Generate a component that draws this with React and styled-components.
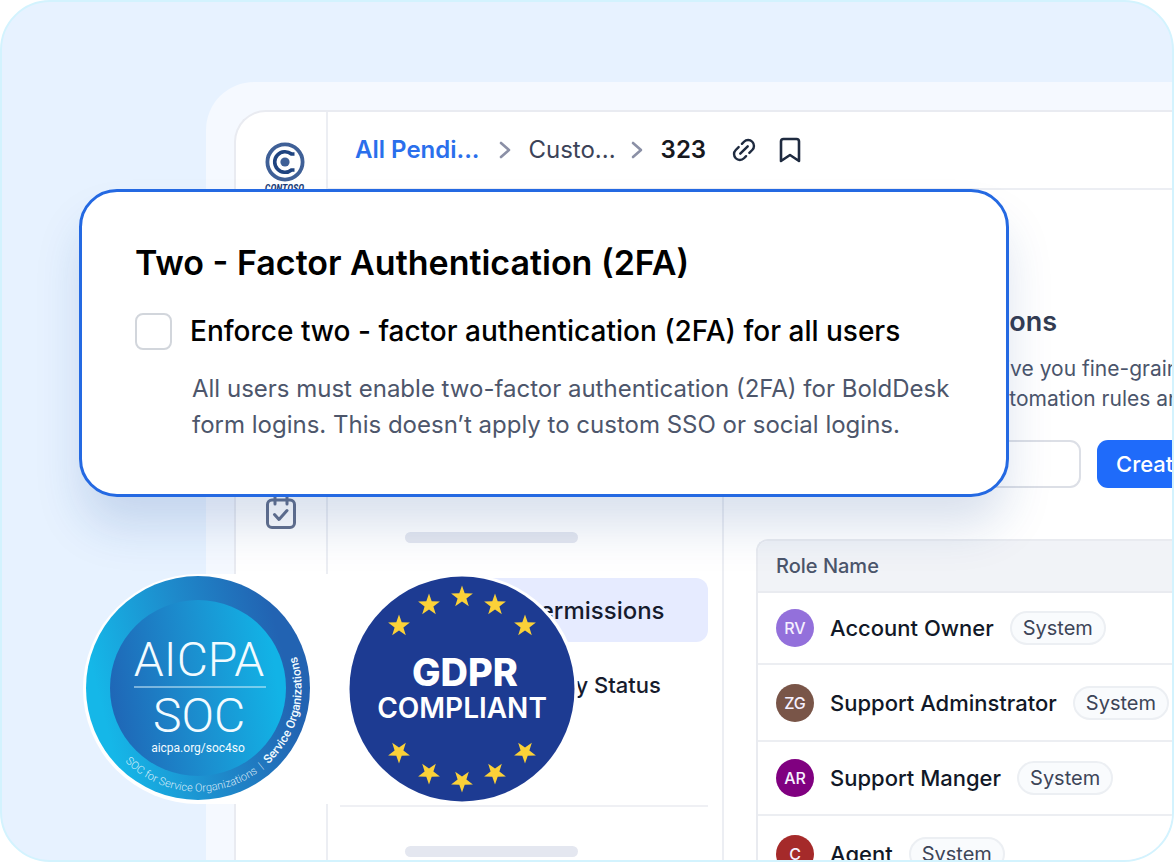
import styled, { createGlobalStyle } from "styled-components";

const GlobalStyle = createGlobalStyle`
  * {
    box-sizing: border-box;
  }
  body {
    margin: 0;
    background: #fff;
    font-family: Inter, "Liberation Sans", sans-serif;
    color: #111827;
  }
  h1, h2, p {
    margin: 0;
  }
`;

const Stage = styled.div`
  position: relative;
  display: flex;
  height: 100vh;
  padding: 80px 0 0 204px;
  overflow: hidden;
  border: 2px solid #d3f3fe;
  border-radius: 50px;
  background: #e7f2ff;
`;

const Frame = styled.div`
  display: flex;
  flex: 1;
  min-width: 0;
  padding: 28px 0 0 28px;
  border-top-left-radius: 48px;
  background: #f5f9ff;
`;

const AppWindow = styled.div`
  display: flex;
  flex: 1;
  min-width: 0;
  overflow: hidden;
  border: solid #e9ebf1;
  border-width: 2px 0 0 2px;
  border-top-left-radius: 32px;
  background: #fff;
`;

const Rail = styled.aside`
  display: flex;
  flex: none;
  flex-direction: column;
  align-items: center;
  gap: 300px;
  width: 92px;
  padding-top: 30px;
  border-right: 2px solid #eceef3;
`;

const Brand = styled.div`
  display: flex;
  flex-direction: column;
  align-items: center;
  height: 52px;
  padding-left: 7px;
  font: italic 700 10px/14px "Liberation Sans Narrow", "Roboto Condensed", Roboto, sans-serif;
  color: #1f3f7a;

  svg {
    flex: none;
  }
`;

const IconButton = styled.button`
  display: flex;
  padding: 0;
  border: 0;
  background: none;
  color: ${(props) => props.color};
`;

const Content = styled.div`
  display: flex;
  flex: 1;
  flex-direction: column;
  min-width: 0;
`;

const TopBar = styled.header`
  display: flex;
  flex: none;
  align-items: center;
  height: 78px;
  padding-left: 27px;
  border-bottom: 2px solid #eceef3;
  color: #8b90a6;
`;

const Crumb = styled.a`
  font-size: 24px;
  line-height: 32px;
  font-weight: ${(props) => props.weight};
  color: ${(props) => props.color};
  text-decoration: none;
  white-space: nowrap;
`;

const CrumbChevron = styled.svg`
  flex: none;
  margin: 0 ${(props) => props.$after}px 0 ${(props) => props.$before}px;
`;

const TopActions = styled.div`
  display: flex;
  align-items: center;
  gap: 21px;
  margin-left: 24px;
`;

const Body = styled.div`
  display: flex;
  flex: 1;
  min-height: 0;
`;

const SideNav = styled.nav`
  flex: none;
  width: 396px;
  padding: 342px 14px 0 12px;
  border-right: 2px solid #eceef3;
`;

const Skeleton = styled.div`
  width: 173px;
  height: 11px;
  margin-left: 65px;
  border-radius: 6px;
  background: #e4e7f0;
`;

const NavItem = styled.a`
  display: flex;
  align-items: center;
  height: 64px;
  margin-top: ${(props) => (props.$active ? 35 : 11)}px;
  padding-left: 66px;
  border-radius: 12px;
  background: ${(props) => (props.$active ? "#e6ebff" : "none")};
  font-size: ${(props) => (props.$active ? 24 : 22)}px;
  font-weight: 500;
  color: #161b2d;
  text-decoration: none;
  white-space: nowrap;
`;

const Divider = styled.hr`
  height: 2px;
  margin: 88px 0 39px;
  border: 0;
  background: #eff0f4;
`;

const Main = styled.main`
  flex: 1;
  min-width: 0;
  padding: 114px 0 0 32px;
  overflow: hidden;
`;

const PageTitle = styled.h1`
  padding-left: 7px;
  font-size: 27px;
  line-height: 36px;
  font-weight: 600;
  color: #333c52;
  white-space: nowrap;
`;

const PageText = styled.p`
  margin-top: 14px;
  padding-left: 7px;
  font-size: 21px;
  line-height: 30px;
  color: #4b556b;
  white-space: nowrap;
`;

const Toolbar = styled.div`
  display: flex;
  gap: 16px;
  margin-top: 26px;
`;

const SearchInput = styled.input`
  flex: none;
  width: 325px;
  height: 48px;
  padding: 0 16px;
  border: 2px solid #dcdfe6;
  border-radius: 11px;
  background: transparent;
  font: 20px Inter, sans-serif;
`;

const CreateButton = styled.button`
  flex: none;
  height: 48px;
  padding: 0 19px;
  border: 0;
  border-radius: 11px;
  background: #1f6bfa;
  font: 500 22px Inter, sans-serif;
  color: #fff;
`;

const TableBox = styled.div`
  margin-top: 51px;
  overflow: hidden;
  border: solid #e9ebf0;
  border-width: 2px 0 0 2px;
  border-top-left-radius: 12px;
`;

const RoleTable = styled.table`
  width: 100%;
  border-collapse: collapse;

  th {
    height: 51px;
    padding: 0 18px;
    border-bottom: 2px solid #e9ebf0;
    background: #f1f3f7;
    font-size: 20px;
    font-weight: 500;
    text-align: left;
    color: #4b556b;
  }
  td {
    padding: 0 18px;
    border-bottom: 2px solid #eceef2;
  }
`;

const RoleRow = styled.tr`
  height: ${(props) => props.$height}px;
`;

const RoleCell = styled.div`
  display: flex;
  align-items: center;
  font-size: 22px;
  font-weight: 500;
  white-space: nowrap;
`;

const Avatar = styled.span`
  display: flex;
  flex: none;
  align-items: center;
  justify-content: center;
  width: 38px;
  height: 38px;
  margin-right: 16px;
  border-radius: 50%;
  background: ${(props) => props.color};
  font-size: 16px;
  font-weight: 500;
  color: #f6f0ff;
`;

const Tag = styled.span`
  margin-left: 16px;
  padding: 0 11px;
  border: 2px solid #eceff3;
  border-radius: 18px;
  background: #f9fbfd;
  font-size: 20px;
  line-height: 30px;
  font-weight: 400;
  color: #3d4558;
`;

const AuthCard = styled.section`
  position: absolute;
  top: 187px;
  left: 77px;
  right: 163px;
  padding: 47px 53px 51px;
  border: 3px solid #2469e2;
  border-radius: 38px;
  background: #fff;
  box-shadow: 0 32px 48px -4px rgba(25, 70, 150, 0.17);
`;

const CardTitle = styled.h2`
  font-size: 34px;
  line-height: 48px;
  font-weight: 600;
  color: #000;
`;

const CheckLabel = styled.label`
  display: flex;
  align-items: center;
  gap: 18px;
  margin-top: 24px;
  font-size: 28px;
  line-height: 40px;
  font-weight: 500;
  color: #000;
`;

const Checkbox = styled.input`
  flex: none;
  width: 37px;
  height: 37px;
  margin: 0;
  appearance: none;
  border: 2px solid #d2d6dc;
  border-radius: 8px;
  background: #fff;
`;

const CardText = styled.p`
  margin-top: 20px;
  padding-left: 57px;
  font-size: 24px;
  line-height: 36px;
  color: #4d566b;
  white-space: nowrap;
`;

const Badges = styled.div`
  position: absolute;
  top: 572px;
  left: 81px;
  display: flex;
  gap: 39px;
  padding: 2px 3px;
  border-radius: 115px;
  background: #fff;
`;

const roles = [
  { initials: "RV", name: "Account Owner", color: "#9370db", height: 72 },
  { initials: "ZG", name: "Support Adminstrator", color: "#795548", height: 77 },
  { initials: "AR", name: "Support Manger", color: "#800080", height: 74 },
  { initials: "C", name: "Agent", color: "#a52a2a", height: 78 },
];

const stars = [
  [0, -92],
  [33, -84],
  [63, -63],
];

function Chevron({ before, after }) {
  return (
    <CrumbChevron $before={before} $after={after} width="12" height="18" viewBox="0 0 12 18" fill="none">
      <path d="M2 2l8 7-8 7" stroke="currentColor" strokeWidth="2.6" strokeLinecap="round" strokeLinejoin="round" />
    </CrumbChevron>
  );
}

function ContosoLogo() {
  return (
    <svg width="40" height="40" viewBox="0 0 40 40" fill="none">
      <circle cx="20" cy="20" r="17.6" stroke="#3f6097" strokeWidth="3.8" />
      <path d="M29.500 12H26.500A10.300 10.300 0 1 0 26.500 28H29.500" stroke="#1f4480" strokeWidth="3.6" />
      <circle cx="20" cy="20" r="4.6" fill="#3f6097" />
    </svg>
  );
}

function CalendarIcon() {
  return (
    <svg width="32" height="36" viewBox="0 0 32 36" fill="none" stroke="currentColor" strokeWidth="3" strokeLinecap="round" strokeLinejoin="round">
      <rect x="2.5" y="6" width="27" height="27.5" rx="4.5" />
      <path d="M10 2v8M22 2v8M9.5 20.5l4.5 5 8-9" />
    </svg>
  );
}

function LinkIcon() {
  return (
    <svg width="28" height="28" viewBox="0 0 24 24" fill="none" stroke="currentColor" strokeWidth="2.1" strokeLinecap="round">
      <g transform="rotate(-45 12 12)">
        <path d="M9.5 17H7A5 5 0 0 1 7 7h3.500M14.500 7H17a5 5 0 0 1 0 10h-3.500M7.500 12h9" />
      </g>
    </svg>
  );
}

function BookmarkIcon() {
  return (
    <svg width="22" height="26" viewBox="0 0 22 26" fill="none" stroke="currentColor" strokeWidth="2.6" strokeLinejoin="round">
      <path d="M2 24V4.500A2.500 2.500 0 0 1 4.500 2h13A2.500 2.500 0 0 1 20 4.500V24l-9-6z" />
    </svg>
  );
}

function SocBadge() {
  return (
    <svg width="224" height="224" viewBox="-112 -112 224 224" role="img" aria-label="AICPA SOC" fontFamily="Roboto, sans-serif" fill="#f2fbff">
      <defs>
        <linearGradient id="socOuter" x1="0" y1="0.65" x2="1" y2="0.4">
          <stop offset="0.08" stopColor="#15b7e8" />
          <stop offset="0.5" stopColor="#1e8acb" />
          <stop offset="0.9" stopColor="#2263b2" />
        </linearGradient>
        <linearGradient id="socInner" x1="0" y1="0.6" x2="1" y2="0.45">
          <stop offset="0" stopColor="#1f66b6" />
          <stop offset="0.5" stopColor="#1b8fcf" />
          <stop offset="0.95" stopColor="#12b3e6" />
        </linearGradient>
        <path id="socArc" d="M-73 73.500A103.600 103.600 0 0 0 92 -47.600" />
      </defs>
      <circle r="112" fill="url(#socOuter)" />
      <circle r="88" fill="url(#socInner)" />
      <g textAnchor="middle">
        <text x="1" y="-12" fontSize="48" fontWeight="300">AICPA</text>
        <path d="M-64 -1h132" stroke="#d9f2fb" strokeWidth="1" />
        <text x="1" y="44" fontSize="48" fontWeight="300">SOC</text>
        <text x="0" y="64" fontSize="12">aicpa.org/soc4so</text>
      </g>
      <text fontSize="11" fontWeight="300">
        <textPath href="#socArc">
          <tspan fillOpacity="0.85">SOC for Service Organizations &nbsp;| &nbsp;</tspan>
          <tspan fontSize="12" fontWeight="500">Service Organizations</tspan>
        </textPath>
      </text>
    </svg>
  );
}

function GdprBadge() {
  const star = "M0 -11.500L2.700 -3.700L10.900 -3.500L4.400 1.400L6.800 9.300L0 4.600L-6.800 9.300L-4.400 1.400L-10.900 -3.500L-2.700 -3.700Z";
  const points = [...stars, ...stars.slice(1).map(([x, y]) => [-x, y])];
  return (
    <svg width="226" height="226" viewBox="-113 -113 226 226" role="img" aria-label="GDPR compliant" fontFamily="Inter, sans-serif">
      <circle r="112.5" fill="#1d3b92" />
      {points.map(([x, y]) => (
        <g key={x} fill="#fbd138">
          <path d={star} transform={`translate(${x} ${y})`} />
          <path d={star} transform={`translate(${x} ${-y}) rotate(180)`} />
        </g>
      ))}
      <g fill="#fff" textAnchor="middle">
        <text x="3" y="-3" fontSize="38" fontWeight="800">GDPR</text>
        <text x="0" y="29" fontSize="28" fontWeight="600">COMPLIANT</text>
      </g>
    </svg>
  );
}

function RolesTable() {
  return (
    <TableBox>
      <RoleTable>
        <thead>
          <tr>
            <th scope="col">Role Name</th>
          </tr>
        </thead>
        <tbody>
          {roles.map((role) => (
            <RoleRow key={role.name} $height={role.height}>
              <td>
                <RoleCell>
                  <Avatar color={role.color}>{role.initials}</Avatar>
                  {role.name}
                  <Tag>System</Tag>
                </RoleCell>
              </td>
            </RoleRow>
          ))}
        </tbody>
      </RoleTable>
    </TableBox>
  );
}

function App() {
  return (
    <>
      <GlobalStyle />
      <Stage>
        <Frame>
          <AppWindow>
            <Rail>
              <Brand>
                <ContosoLogo />
                CONTOSO
              </Brand>
              <IconButton color="#64708c" aria-label="Tasks">
                <CalendarIcon />
              </IconButton>
            </Rail>
            <Content>
              <TopBar>
                <Crumb href="#" weight={600} color="#2a6fec">All Pendi...</Crumb>
                <Chevron before={20} after={17} />
                <Crumb href="#" weight={400} color="#3b4358">Custo...</Crumb>
                <Chevron before={15} after={18} />
                <Crumb href="#" weight={600} color="#17191f">323</Crumb>
                <TopActions>
                  <IconButton color="#1f2b40" aria-label="Copy link">
                    <LinkIcon />
                  </IconButton>
                  <IconButton color="#1f2b40" aria-label="Bookmark">
                    <BookmarkIcon />
                  </IconButton>
                </TopActions>
              </TopBar>
              <Body>
                <SideNav>
                  <Skeleton />
                  <NavItem href="#" $active>Roles and Permissions</NavItem>
                  <NavItem href="#">Agent Availability Status</NavItem>
                  <Divider />
                  <Skeleton />
                </SideNav>
                <Main>
                  <PageTitle>Roles and Permissions</PageTitle>
                  <PageText>
                    Roles and permissions give you fine-grained
                    <br />
                    control over contacts, automation rules and
                  </PageText>
                  <Toolbar>
                    <SearchInput type="search" aria-label="Search roles" />
                    <CreateButton>Create Role</CreateButton>
                  </Toolbar>
                  <RolesTable />
                </Main>
              </Body>
            </Content>
          </AppWindow>
        </Frame>

        <AuthCard>
          <CardTitle>Two - Factor Authentication (2FA)</CardTitle>
          <CheckLabel>
            <Checkbox type="checkbox" />
            Enforce two - factor authentication (2FA) for all users
          </CheckLabel>
          <CardText>
            All users must enable two-factor authentication (2FA) for BoldDesk
            <br />
            form logins. This doesn’t apply to custom SSO or social logins.
          </CardText>
        </AuthCard>

        <Badges>
          <SocBadge />
          <GdprBadge />
        </Badges>
      </Stage>
    </>
  );
}

export default App;
